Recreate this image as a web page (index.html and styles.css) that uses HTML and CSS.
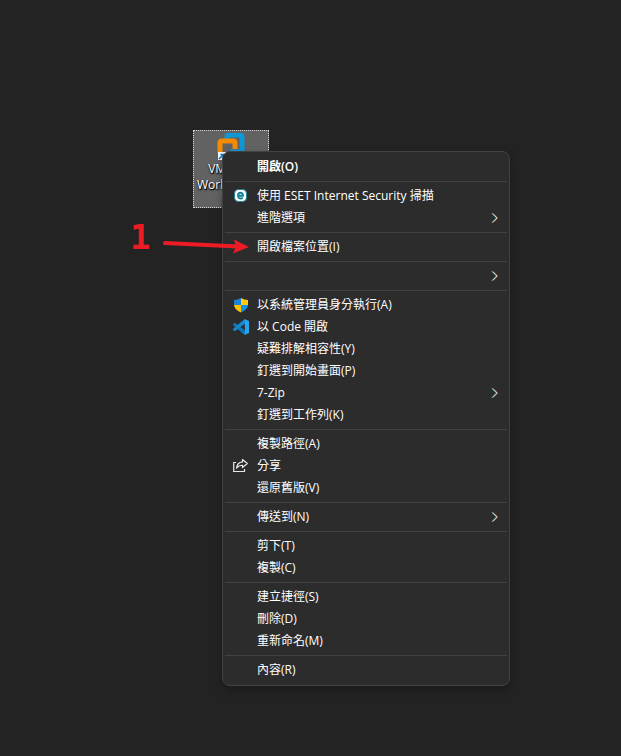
FILE: index.html
```html
<!DOCTYPE html>
<html lang="zh-Hant">
<head>
<meta charset="utf-8">
<title>Desktop</title>
<link rel="stylesheet" href="styles.css">
</head>
<body>
<svg class="symbols" aria-hidden="true">
  <symbol id="chevron" viewBox="0 0 8 12">
    <path class="chevron-warm" d="M2 1.500 6.500 6 2 10.500"/>
    <path class="chevron-cool" d="M1 1.500 5.500 6 1 10.500"/>
    <path class="chevron-core" d="M1.500 1.500 6 6 1.500 10.500"/>
  </symbol>
</svg>
<main class="desktop">
  <button class="shortcut" type="button">
    <svg class="shortcut-icon" viewBox="0 0 28 28" aria-hidden="true">
      <path d="M10 10V4Q10 2 12 2H23Q25 2 25 4V17Q25 19 23 19H13" fill="none" stroke="#0d98d8" stroke-width="5"/>
      <path d="M3 20V10Q3 8 5 8H16Q18 8 18 10V16" fill="none" stroke="#f28c05" stroke-width="5"/>
      <path d="M1 19H9V27H1Z" fill="#f5f7fa"/>
      <path d="M2 26 6 22M3.500 21.500H6.500V24.500" fill="none" stroke="#087ac5" stroke-width="1.500"/>
    </svg>
    <span class="shortcut-label">VMware Workstation Pro</span>
  </button>

  <div class="menu" role="menu">
    <button class="item default" type="button" role="menuitem"><span class="label">開啟(O)</span></button>
    <hr>
    <button class="item" type="button" role="menuitem">
      <svg class="icon" viewBox="0 0 16 16" aria-hidden="true">
        <rect x="1.500" y="1.500" width="12" height="12" rx="4" fill="#fff" stroke="#168796"/>
        <path d="M5 7.700H10C10 3.700 5 3.700 5 7.700C5 10.800 8 11 9.800 9.900" fill="none" stroke="#118292" stroke-width="1.900"/>
      </svg>
      <span class="label">使用 ESET Internet Security 掃描</span>
    </button>
    <button class="item" type="button" role="menuitem" aria-haspopup="menu"><span class="label">進階選項</span><svg class="chevron" aria-hidden="true"><use href="#chevron"/></svg></button>
    <hr>
    <button class="item" type="button" role="menuitem"><span class="label">開啟檔案位置(I)</span></button>
    <hr>
    <button class="item" type="button" role="menuitem" aria-haspopup="menu"><span class="label"></span><svg class="chevron" aria-hidden="true"><use href="#chevron"/></svg></button>
    <hr>
    <button class="item" type="button" role="menuitem">
      <svg class="icon" viewBox="0 0 16 16" aria-hidden="true">
        <path d="M8 1Q5 3 1 3V8H8Z" fill="#1784d8"/>
        <path d="M8 1Q11 3 15 3V8H8Z" fill="#ffcb12"/>
        <path d="M1 8H8V15.500Q1.500 13 1 8Z" fill="#ffc400"/>
        <path d="M8 8H15Q14.500 13 8 15.500Z" fill="#1391e7"/>
      </svg>
      <span class="label">以系統管理員身分執行(A)</span>
    </button>
    <button class="item" type="button" role="menuitem">
      <svg class="icon" viewBox="0 0 16 16" aria-hidden="true">
        <path d="M1.300 3.900 0 5.100V6L11.500 16 12.500 11.800 2.200 3.900Z" fill="#0878bd"/>
        <path d="M1.300 12.100 0 10.900V10L11.500 0 12.500 4.200 2.200 12.100Z" fill="#1687cd"/>
        <path d="M11.500 0 16 2V14L11.500 16 12 12Z" fill="#29a3ee"/>
      </svg>
      <span class="label">以 Code 開啟</span>
    </button>
    <button class="item" type="button" role="menuitem"><span class="label">疑難排解相容性(Y)</span></button>
    <button class="item" type="button" role="menuitem"><span class="label">釘選到開始畫面(P)</span></button>
    <button class="item" type="button" role="menuitem" aria-haspopup="menu"><span class="label">7-Zip</span><svg class="chevron" aria-hidden="true"><use href="#chevron"/></svg></button>
    <button class="item" type="button" role="menuitem"><span class="label">釘選到工作列(K)</span></button>
    <hr>
    <button class="item" type="button" role="menuitem"><span class="label">複製路徑(A)</span></button>
    <button class="item" type="button" role="menuitem">
      <svg class="icon" viewBox="0 0 16 16" aria-hidden="true">
        <path d="M3 4.500H.700V13.500H11.500V11" fill="none" stroke="#e8e8e8" stroke-width="1.200"/>
        <path d="M9.500 1.500 14.300 5.500 9.500 9.500V7.300Q6 7 3.500 10.200Q4 4.500 9.500 3.900Z" fill="none" stroke="#e8e8e8" stroke-width="1.200" stroke-linejoin="round"/>
      </svg>
      <span class="label">分享</span>
    </button>
    <button class="item" type="button" role="menuitem"><span class="label">還原舊版(V)</span></button>
    <hr>
    <button class="item" type="button" role="menuitem" aria-haspopup="menu"><span class="label">傳送到(N)</span><svg class="chevron" aria-hidden="true"><use href="#chevron"/></svg></button>
    <hr>
    <button class="item" type="button" role="menuitem"><span class="label">剪下(T)</span></button>
    <button class="item" type="button" role="menuitem"><span class="label">複製(C)</span></button>
    <hr>
    <button class="item" type="button" role="menuitem"><span class="label">建立捷徑(S)</span></button>
    <button class="item" type="button" role="menuitem"><span class="label">刪除(D)</span></button>
    <button class="item" type="button" role="menuitem"><span class="label">重新命名(M)</span></button>
    <hr>
    <button class="item" type="button" role="menuitem"><span class="label">內容(R)</span></button>
  </div>

  <div class="callout">
    <span class="callout-number">1</span>
    <svg class="callout-arrow" viewBox="0 0 88 18" aria-hidden="true">
      <path d="M3 6 76 9.500" stroke="#ed1c24" stroke-width="4" stroke-linecap="round"/>
      <path d="M72 2.500 87 10 71 16.500 74 9.500Z" fill="#ed1c24"/>
    </svg>
  </div>
</main>
</body>
</html>
```
FILE: styles.css
```css
* {
  box-sizing: border-box;
}

body {
  margin: 0;
  background: #232323;
  color: #fff;
  font: 12px/16px "Open Sans", "Noto Sans CJK TC", sans-serif;
}

button {
  margin: 0;
  border: 0;
  background: none;
  color: inherit;
  font: inherit;
}

.symbols {
  position: absolute;
  width: 0;
  height: 0;
}

.desktop {
  position: relative;
  min-height: 100vh;
}

.shortcut {
  position: absolute;
  left: 193px;
  top: 130px;
  display: flex;
  flex-direction: column;
  align-items: center;
  width: 76px;
  height: 78px;
  padding: 2px 0 0;
  border: 1px dotted #d8d8d8;
  background: #626262;
}

.shortcut-icon {
  flex: none;
  width: 28px;
  height: 28px;
}

.shortcut-label {
  text-align: center;
  text-shadow: 1px 1px 1px #000, 0 1px 2px #000;
}

.menu {
  position: absolute;
  left: 222px;
  top: 151px;
  width: 288px;
  padding: 4px 2px;
  border: 1px solid #424242;
  border-radius: 8px;
  background: #2c2c2c;
  box-shadow: 0 4px 8px rgba(0, 0, 0, 0.25);
}

.menu hr {
  height: 1px;
  margin: 3px 0;
  border: 0;
  background: #414141;
}

.item {
  display: grid;
  grid-template-columns: 16px 1fr 8px;
  column-gap: 8px;
  align-items: center;
  width: 100%;
  height: 22px;
  padding: 0 8px;
  text-align: left;
  white-space: nowrap;
}

.item:hover {
  background: #383838;
}

.default {
  font-weight: 600;
}

.icon {
  grid-column: 1;
  width: 16px;
  height: 16px;
}

.label {
  grid-column: 2;
}

.chevron {
  grid-column: 3;
  width: 8px;
  height: 12px;
}

.chevron-cool,
.chevron-warm,
.chevron-core {
  fill: none;
  stroke-width: 1;
}

.chevron-cool {
  stroke: #36c0dc;
}

.chevron-warm {
  stroke: #ff8a48;
}

.chevron-core {
  stroke: #f0f4f0;
  stroke-width: 0.6;
}

.callout {
  position: absolute;
  left: 130px;
  top: 220px;
  display: flex;
  gap: 8px;
  color: #ed1c24;
  pointer-events: none;
}

.callout-number {
  width: 24px;
  font: bold 34px/34px "DejaVu Sans Mono", monospace;
}

.callout-arrow {
  width: 88px;
  height: 18px;
  margin-top: 17px;
}
```
